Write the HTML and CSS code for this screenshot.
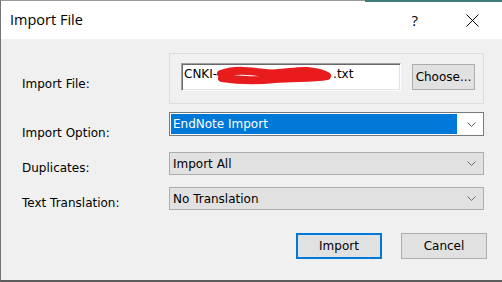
FILE: index.html
```html
<!DOCTYPE html>
<html lang="en">
<head>
    <meta charset="UTF-8">
    <title>Import File</title>
    <link rel="stylesheet" href="styles.css">
</head>
<body>

    <!-- Dialog window -->
    <div class="dialog">

        <!-- Title bar -->
        <div class="titlebar">
            <span class="title">Import File</span>
            <span class="help">?</span>
            <svg class="close" width="13" height="13" viewBox="0 0 13 13">
                <path d="M0.5 0.5 L12.5 12.5 M12.5 0.5 L0.5 12.5" stroke="#000" stroke-width="1" fill="none"/>
            </svg>
        </div>

        <!-- Dialog body -->
        <div class="body">

            <div class="row row-file">
                <label class="lbl lbl-file">Import File:</label>
                <div class="groupbox">
                    <div class="textbox">
                        CNKI-<span class="redact-spot"><svg class="redact" width="124" height="22" viewBox="0 0 124 22">
                            <path d="M6 9 C 20 4, 35 6, 50 8 C 65 10, 80 5, 92 6 C 102 7, 108 8, 112 11 C 96 14, 78 12, 60 14 C 40 16, 20 15, 7 13" stroke="#e81b1d" stroke-width="8" stroke-linecap="round" stroke-linejoin="round" fill="none"/>
                        </svg></span>.txt
                    </div>
                    <div class="btn btn-choose">Choose...</div>
                </div>
            </div>

            <div class="row row-option">
                <label class="lbl lbl-option">Import Option:</label>
                <div class="select select-active">
                    <span class="highlight">EndNote Import</span>
                    <svg class="chevron" width="9" height="5" viewBox="0 0 9 5"><path d="M0.5 0.5 L4.5 4.5 L8.5 0.5" stroke="#5f5f5f" fill="none"/></svg>
                </div>
            </div>

            <div class="row row-dup">
                <label class="lbl lbl-dup">Duplicates:</label>
                <div class="select">
                    <span class="value">Import All</span>
                    <svg class="chevron" width="9" height="5" viewBox="0 0 9 5"><path d="M0.5 0.5 L4.5 4.5 L8.5 0.5" stroke="#6a6a6a" fill="none"/></svg>
                </div>
            </div>

            <div class="row row-trans">
                <label class="lbl lbl-trans">Text Translation:</label>
                <div class="select">
                    <span class="value">No Translation</span>
                    <svg class="chevron" width="9" height="5" viewBox="0 0 9 5"><path d="M0.5 0.5 L4.5 4.5 L8.5 0.5" stroke="#6a6a6a" fill="none"/></svg>
                </div>
            </div>

            <!-- Action buttons -->
            <div class="actions">
                <div class="btn btn-action btn-default">Import</div>
                <div class="btn btn-action">Cancel</div>
            </div>
        </div>
    </div>

</body>
</html>
```

FILE: styles.css
```css
/* Page reset */
body {
    margin: 0;
    background: #f0f0f0;
    font-family: "DejaVu Sans", sans-serif;
    font-size: 12px;
    color: #000;
}

/* Window frame */
.dialog {
    width: 502px;
    height: 282px;
    box-sizing: border-box;
    border-top: 1px solid #9a9a9a;
    border-left: 1px solid #747474;
    border-bottom: 2px solid #5c5c5c;
    background: #f0f0f0;
    position: relative;
}

/* Teal edge of the window behind */
.dialog::before {
    content: "";
    position: absolute;
    top: -1px;
    left: 364px;
    right: 0;
    height: 2px;
    background: #3d7e78;
}

/* Title bar */
.titlebar {
    height: 38px;
    background: #fff;
    display: flex;
    align-items: center;
    padding-left: 9px;
}

.title {
    font-family: "Open Sans", sans-serif;
    font-size: 14.5px;
    color: #000;
    flex: 1;
    padding-bottom: 1px;
}

.help {
    font-family: "Open Sans", sans-serif;
    font-size: 15px;
    margin-right: 48px;
    padding-bottom: 1px;
}

.close {
    margin-right: 23px;
}

/* Body of the dialog */
.body {
    padding: 14px 15px 0 21px;
}

.row {
    display: grid;
    grid-template-columns: 147px 315px;
}

.lbl {
    line-height: 14px;
}

.lbl-file { padding-top: 24px; }
.lbl-option { padding-top: 14px; }
.lbl-dup { padding-top: 9px; }
.lbl-trans { padding-top: 9px; }

/* label sits lower than the dropdown, keep the row at the dropdown height */
.row-option { margin-top: 8px; height: 24px; }
.row-dup { margin-top: 16px; }
.row-trans { margin-top: 12px; }

/* Group box around the file field */
.groupbox {
    height: 51px;
    box-sizing: border-box;
    border: 1px solid #dcdcdc;
    display: flex;
    align-items: flex-start;
    padding: 9px 0 0 11px;
}

.textbox {
    width: 220px;
    height: 28px;
    box-sizing: border-box;
    background: #fff;
    border-top: 1px solid #a0a0a0;
    border-left: 1px solid #a0a0a0;
    border-right: 1px solid #fff;
    border-bottom: 1px solid #fff;
    box-shadow: inset 1px 1px 0 #696969, inset -1px -1px 0 #e3e3e3;
    padding: 3px 0 0 2px;
    line-height: 14px;
    white-space: nowrap;
}

.redact-spot {
    display: inline-block;
    width: 116px;
    height: 14px;
    position: relative;
    vertical-align: top;
}

.redact {
    position: absolute;
    left: -2px;
    top: -2px;
}

/* Buttons */
.btn {
    box-sizing: border-box;
    background: #e1e1e1;
    border: 1px solid #adadad;
    display: flex;
    align-items: center;
    justify-content: center;
}

.btn-choose {
    width: 63px;
    height: 26px;
    margin-left: 11px;
    margin-top: 1px;
}

/* Dropdowns */
.select {
    height: 23px;
    box-sizing: border-box;
    background: #e1e1e1;
    border: 1px solid #adadad;
    display: flex;
    align-items: center;
    padding-left: 3px;
    padding-right: 7px;
}

.select .value {
    flex: 1;
}

.select-active {
    height: 24px;
    background: #fff;
    border-color: #7a7a7a;
    padding: 1px 7px 1px 1px;
    align-items: stretch;
}

.highlight {
    flex: 1;
    background: #0078d7;
    color: #fff;
    padding-left: 2px;
    margin-right: 10px;
    display: flex;
    align-items: center;
}

.select-active .chevron {
    align-self: center;
}

/* Bottom button row */
.actions {
    display: flex;
    justify-content: flex-end;
    gap: 19px;
    margin-top: 23px;
}

.btn-action {
    width: 86px;
    height: 26px;
}

.btn-default {
    border: 2px solid #0078d7;
}
```
